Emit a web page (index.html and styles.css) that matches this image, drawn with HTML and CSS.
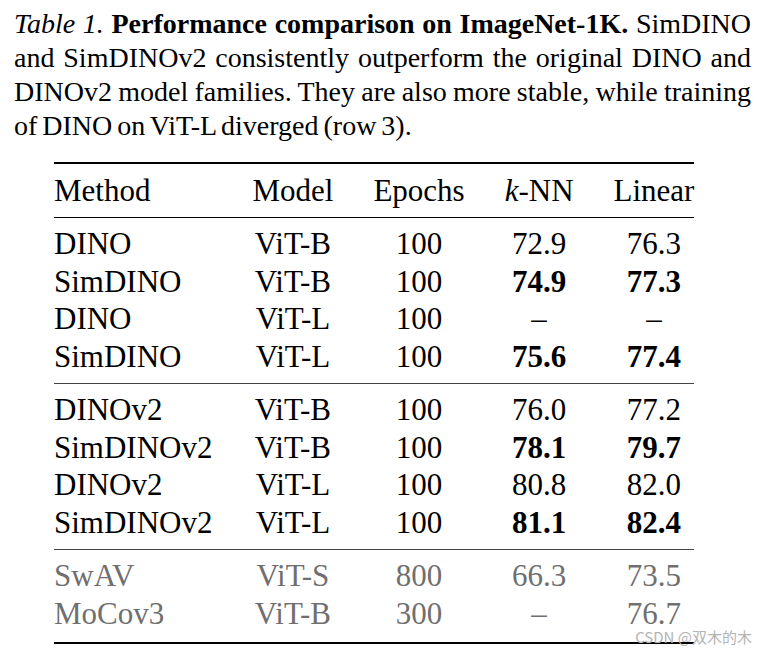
FILE: index.html
```html
<!DOCTYPE html>
<html lang="en">
<head>
<meta charset="utf-8">
<title>Table 1</title>
<link rel="stylesheet" href="styles.css">
</head>
<body>
<div class="page">
  <p class="caption"><i>Table 1.</i> <b>Performance comparison on ImageNet-1K.</b> SimDINO and SimDINOv2 consistently outperform the original DINO and DINOv2 model families. They are also more stable, while training of DINO on ViT-L diverged (row 3).</p>
  <table class="results">
    <thead>
      <tr><th class="method">Method</th><th>Model</th><th>Epochs</th><th><i>k</i>-NN</th><th class="last">Linear</th></tr>
    </thead>
    <tbody class="group">
      <tr><td class="method">DINO</td><td>ViT-B</td><td>100</td><td>72.9</td><td class="last">76.3</td></tr>
      <tr><td class="method">SimDINO</td><td>ViT-B</td><td>100</td><td><b>74.9</b></td><td class="last"><b>77.3</b></td></tr>
      <tr><td class="method">DINO</td><td>ViT-L</td><td>100</td><td>–</td><td class="last">–</td></tr>
      <tr><td class="method">SimDINO</td><td>ViT-L</td><td>100</td><td><b>75.6</b></td><td class="last"><b>77.4</b></td></tr>
    </tbody>
    <tbody class="group">
      <tr><td class="method">DINOv2</td><td>ViT-B</td><td>100</td><td>76.0</td><td class="last">77.2</td></tr>
      <tr><td class="method">SimDINOv2</td><td>ViT-B</td><td>100</td><td><b>78.1</b></td><td class="last"><b>79.7</b></td></tr>
      <tr><td class="method">DINOv2</td><td>ViT-L</td><td>100</td><td>80.8</td><td class="last">82.0</td></tr>
      <tr><td class="method">SimDINOv2</td><td>ViT-L</td><td>100</td><td><b>81.1</b></td><td class="last"><b>82.4</b></td></tr>
    </tbody>
    <tbody class="group muted">
      <tr><td class="method">SwAV</td><td>ViT-S</td><td>800</td><td>66.3</td><td class="last">73.5</td></tr>
      <tr><td class="method">MoCov3</td><td>ViT-B</td><td>300</td><td>–</td><td class="last">76.7</td></tr>
    </tbody>
  </table>
  <div class="watermark">CSDN @双木的木</div>
</div>
</body>
</html>
```

FILE: styles.css
```css
html, body {
  margin: 0;
  padding: 0;
  background: #ffffff;
}

.page {
  position: relative;
  width: 757px;
  height: 653px;
  font-family: "Liberation Serif", "Times New Roman", serif;
  color: #000;
}

.caption {
  margin: 0;
  padding: 7px 0 0 14px;
  width: 737px;
  font-size: 28px;
  line-height: 34px;
  word-spacing: -2px;
  text-align: justify;
}

.results {
  margin: 19px 0 0 54px;
  border-collapse: collapse;
  font-size: 31px;
  border-top: 2px solid #000;
  border-bottom: 2px solid #000;
}

.results th,
.results td {
  font-weight: normal;
  text-align: center;
  padding: 0 20px;
  height: 37.5px;
  line-height: 37.5px;
  white-space: nowrap;
}

.results th.method,
.results td.method {
  text-align: left;
  padding-left: 0;
}

.results th.last,
.results td.last {
  padding-right: 0;
}

.results thead th {
  height: 53px;
  border-bottom: 1px solid #000;
}

.results b {
  font-weight: bold;
}

.group tr:first-child td {
  padding-top: 7px;
}

.group tr:last-child td {
  padding-bottom: 8px;
}

.group + .group {
  border-top: 1.5px solid #444;
}

.muted {
  color: #6f6f6f;
}

.muted tr:last-child td {
  padding-bottom: 10px;
}

.watermark {
  position: absolute;
  right: 5px;
  bottom: 8px;
  font-family: "Noto Sans CJK SC", "Noto Sans", sans-serif;
  font-size: 15px;
  line-height: 16px;
  color: #b4b4b4;
}
```
